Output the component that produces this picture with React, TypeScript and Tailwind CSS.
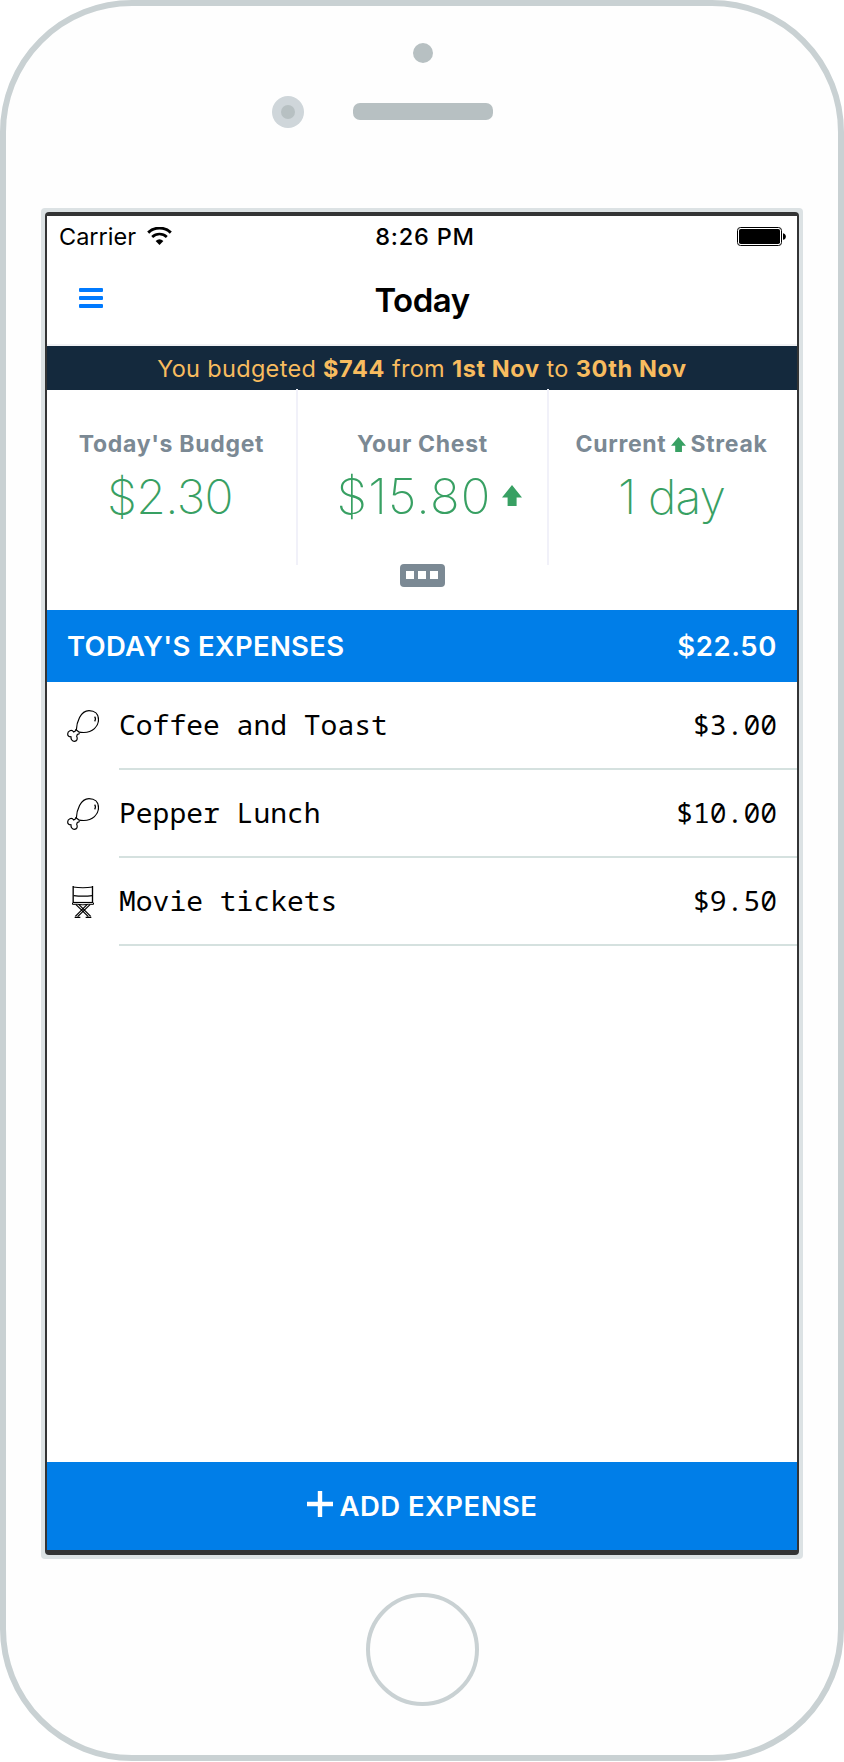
import type { ReactNode } from "react";

type Expense = { icon: "food" | "movie"; name: string; amount: string };

const expenses: Expense[] = [
  { icon: "food", name: "Coffee and Toast", amount: "$3.00" },
  { icon: "food", name: "Pepper Lunch", amount: "$10.00" },
  { icon: "movie", name: "Movie tickets", amount: "$9.50" },
];

function WifiIcon() {
  return (
    <svg className="ml-[11px] h-[19px] w-[25px]" viewBox="0 0 25 19" fill="none">
      <path d="M1.2 5.6 A16.4 16.4 0 0 1 23.8 5.6" stroke="#000" strokeWidth="2.9" />
      <path d="M5.2 9.9 A10.6 10.6 0 0 1 19.8 9.9" stroke="#000" strokeWidth="2.7" />
      <path d="M8.6 13.9 A6.2 6.2 0 0 1 16.4 13.9 L12.5 18 Z" fill="#000" />
    </svg>
  );
}

function BatteryIcon() {
  return (
    <svg className="h-[19px] w-[49px]" viewBox="0 0 49 19">
      <rect x="0.5" y="0.5" width="44" height="18" rx="3" fill="none" stroke="#000" />
      <rect x="2" y="2" width="41" height="15" rx="1.8" fill="#000" />
      <path d="M46 6.2 C49.8 6.6 49.8 12.4 46 12.8 Z" fill="#000" />
    </svg>
  );
}

function UpArrow({ className }: { className: string }) {
  return (
    <svg className={className} viewBox="0 0 20 21" preserveAspectRatio="none">
      <path d="M10 0 L20 12.4 H14.6 V21 H5.6 V12.4 H0 Z" fill="#38a063" />
    </svg>
  );
}

function DrumstickIcon() {
  return (
    <svg className="h-8 w-8" viewBox="0 0 96 96" fill="none" stroke="#000" strokeWidth="3.6" strokeLinejoin="round">
      <path d="M28 60 C29 38 40 2 66 2 C83 2 94.5 12 94.5 29 C94.5 50 77 67 50 67.5 C44 67.5 38 66.5 35 65 Z" />
      <path d="M27 57 L26 62 L20 66 C14 57 2 63 2 72 C2 79 7 81 12 80 C11 88 16 94 22 94 C30 94 33 87 29 79 L31 73 L36 72 L37 67" />
      <path d="M83 20 C86 24 86 29 83 34" />
    </svg>
  );
}

function DirectorChairIcon() {
  return (
    <svg className="h-8 w-[22px]" viewBox="0 0 66 96" fill="none" stroke="#000" strokeWidth="3">
      <path d="M3.5 0 V50 M61.5 0 V50" strokeWidth="4" />
      <path d="M3 3 Q33 7 62 3" strokeWidth="3.2" />
      <path d="M5 29 Q33 32 61 29" strokeWidth="4" />
      <path d="M3 49.5 H63" strokeWidth="3.6" />
      <path d="M1.5 50 V55 H16 Q33 58 49 55 H64.5 V50" />
      <path d="M12 56 L49 92 M21 56 L56 91 M54 56 L17 92 M45 56 L10 91" strokeWidth="3.8" />
      <path d="M8 94 H25 M41 94 H58" strokeWidth="4" />
    </svg>
  );
}

function Stat({ label, children, className }: { label: ReactNode; children: ReactNode; className: string }) {
  return (
    <div className={className}>
      <div className="mt-[40px] flex h-[30px] items-center justify-center text-[23px] leading-[30px] font-[680] tracking-[0.7px] text-[#7b8994]">
        {label}
      </div>
      <div className="mt-[8px] flex h-[60px] items-center justify-center text-[48px] leading-[60px] text-[#38a063]">
        {children}
      </div>
    </div>
  );
}

export default function App() {
  return (
    <div className="flex h-[1762px] w-[844px] flex-col bg-white font-['Inter','Liberation_Sans',sans-serif] text-black">
      <div className="flex h-[1761px] flex-col items-center rounded-[132px] border-6 border-[#c9d1d3] bg-[#fefefe]">
        <div className="mt-[37px] ml-[2px] size-5 rounded-full bg-[#b7c0c2]" />
        <div className="mt-[33px] flex w-full items-center pl-[266px]">
          <div className="flex size-8 items-center justify-center rounded-full bg-[#cfd6da]">
            <div className="size-[14px] rounded-full bg-[#b7c0c2]" />
          </div>
          <div className="mb-px ml-[49px] h-[17px] w-[140px] rounded-[7px] bg-[#b7c0c2]" />
        </div>

        <div className="mt-[80px] h-[1351px] w-[762px] rounded-[4px] bg-[#dce2e4] p-1">
          <div className="flex h-[1343px] w-[754px] flex-col rounded-[4px] bg-[#333435] px-[2px] pt-1 pb-[5px]">
            <div className="flex h-[1334px] flex-col bg-white">
              <div className="grid h-10 grid-cols-3 items-center pt-px text-[23.5px] leading-[30px]">
                <div className="flex items-center pl-3">
                  Carrier
                  <WifiIcon />
                </div>
                <div className="pl-[6px] text-center font-medium tracking-[0.8px]">8:26 PM</div>
                <div className="flex justify-end pr-[11px]">
                  <BatteryIcon />
                </div>
              </div>

              <header className="grid h-[90px] grid-cols-3 items-center border-b-2 border-[#f1f2f5]">
                <button className="mb-1 ml-8 flex h-5 w-6 flex-col justify-between" aria-label="Menu">
                  <span className="h-1 w-6 rounded-[1px] bg-[#007aff]" />
                  <span className="h-1 w-6 rounded-[1px] bg-[#007aff]" />
                  <span className="h-1 w-6 rounded-[1px] bg-[#007aff]" />
                </button>
                <h1 className="text-center text-[33px] leading-10 font-[580] tracking-[-0.5px]">Today</h1>
              </header>

              <div className="h-11 shrink-0 bg-[#14293d] text-center text-[23.5px] leading-[45px] tracking-[0.32px] whitespace-pre text-[#f8bc5f]">
                You budgeted <b className="font-[680] tracking-[0.6px]">$744</b> from{" "}
                <b className="font-[680] tracking-[0.6px]">1st Nov</b> to{" "}
                <b className="font-[680] tracking-[0.6px]">30th Nov</b>
              </div>

              <section className="flex h-[220px] flex-col items-center">
                <div className="-mt-px grid h-[176px] w-full grid-cols-[251px_251px_248px]">
                  <Stat className="border-r-2 border-[#f1f1f9]" label="Today's Budget">
                    <span className="mr-[3px] font-[165] tracking-[-0.6px]">$2.30</span>
                  </Stat>
                  <Stat className="border-r-2 border-[#f1f1f9]" label="Your Chest">
                    <span className="ml-[14px] text-[49px] font-[230] tracking-[1.2px]">$15.80</span>
                    <UpArrow className="mt-[-4px] ml-[11px] h-[21px] w-5" />
                  </Stat>
                  <Stat
                    className="pr-[3px]"
                    label={
                      <>
                        Current
                        <UpArrow className="mx-[4.5px] h-[15px] w-[15px]" />
                        Streak
                      </>
                    }
                  >
                    <span className="font-[165] tracking-[-0.9px]">1 day</span>
                  </Stat>
                </div>
                <div className="-mt-px flex h-[22.5px] w-[45px] items-center justify-center gap-[3.6px] rounded-[4px] bg-[#7b8994]">
                  <span className="size-2 bg-white" />
                  <span className="size-2 bg-white" />
                  <span className="size-2 bg-white" />
                </div>
              </section>

              <div className="flex h-[72px] items-center justify-between bg-[#007ee8] pt-[2px] pr-5 pl-5 text-[27.5px] font-[640] text-white">
                <span className="tracking-[0.3px]">TODAY'S EXPENSES</span>
                <span className="tracking-[0.6px]">$22.50</span>
              </div>

              <ul className="flex-1 font-['Noto_Sans_Mono','DejaVu_Sans_Mono',monospace] text-[28px] leading-[84px]">
                {expenses.map((expense) => (
                  <li key={expense.name} className="flex h-[88px]">
                    <div className="flex w-[72px] shrink-0 items-center pl-[10px]">
                      <div className="flex w-[42px] justify-center pl-[10px]">
                        {expense.icon === "food" ? <DrumstickIcon /> : <DirectorChairIcon />}
                      </div>
                    </div>
                    <div className="flex flex-1 justify-between border-b-2 border-[#d5e1df] pr-5">
                      <span>{expense.name}</span>
                      <span>{expense.amount}</span>
                    </div>
                  </li>
                ))}
              </ul>

              <button className="flex h-[88px] items-center justify-center bg-[#007ee8] pt-[2px] text-[27.5px] font-[640] tracking-[0.45px] text-white">
                <svg className="mt-[-6px] mr-[7px] size-[26px]" viewBox="0 0 26 26">
                  <path d="M13 0 V26 M0 13 H26" stroke="#fff" strokeWidth="4.4" />
                </svg>
                ADD EXPENSE
              </button>
            </div>
          </div>
        </div>

        <div className="mt-[34px] ml-px size-[112.5px] rounded-full border-4 border-[#c9d1d3]" />
      </div>
    </div>
  );
}
